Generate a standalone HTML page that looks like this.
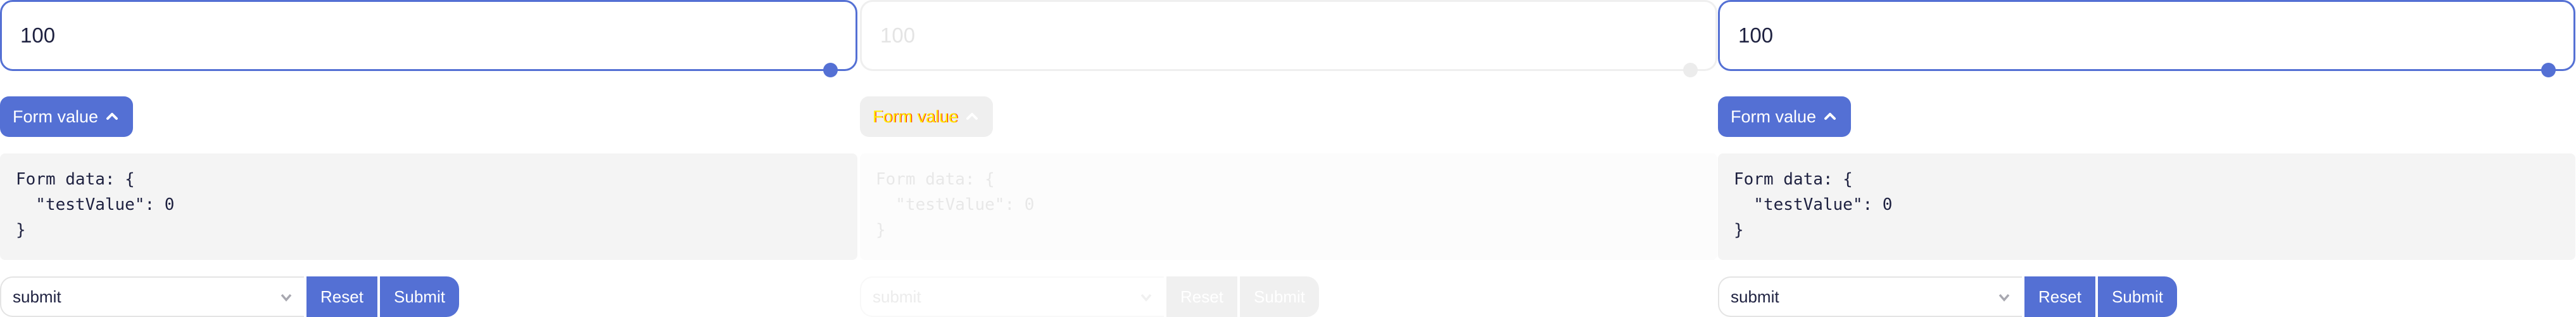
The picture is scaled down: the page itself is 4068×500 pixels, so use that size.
<!DOCTYPE html>
<html><head><style>
*{box-sizing:border-box;margin:0;padding:0}
body{width:4068px;height:500px;background:#fff;position:relative;overflow:hidden;font-family:"Liberation Sans","DejaVu Sans",sans-serif}
.col{position:absolute;top:0;width:1354px;height:500px}
.inp{position:absolute;left:0;top:0;width:1354px;height:112px;border:3px solid #5470d4;border-radius:20px}
.inp span{position:absolute;left:29px;top:33px;font-size:33px;color:#1e2140;line-height:40px}
.knob{position:absolute;left:1300px;top:99px;width:23px;height:23px;border-radius:50%;background:#5470d4}
.fv{position:absolute;left:0;top:152px;width:210px;height:64px;border-radius:14px;background:#5470d4;color:#fff;font-size:27px;line-height:64px;padding-left:20px}
.fv svg{position:absolute;left:166px;top:23px}
.pre{position:absolute;left:0;top:242px;width:1354px;height:168px;background:#f4f4f4;border-radius:8px;font-family:"DejaVu Sans Mono","Liberation Mono",monospace;font-size:26px;line-height:40px;color:#1e2140;padding:21px 0 0 25px;white-space:pre}
.sel{position:absolute;left:0;top:436px;width:480px;height:64px;border:2px solid #e4e4e4;border-right:none;border-radius:20px 0 0 20px;font-size:26px;line-height:60px;padding-left:18px;color:#1e2140}
.sel svg{position:absolute;left:440px;top:24px}
.b{position:absolute;top:436px;height:64px;background:#5470d4;color:#fff;font-size:26px;line-height:64px;text-align:center}
.r{left:484px;width:112px}
.s{left:600px;width:125px;border-radius:0 20px 20px 0}
.d .inp{border-color:#efefef}
.d .inp span{color:#e4e4e4}
.d .knob{background:#ececec}
.d .fv{background:#efefef;color:#ffee00;text-shadow:1px 0 0 #f00}
.d .pre{background:#fcfcfc;color:#e8e8e8}
.d .sel{border-color:#f8f8f8;color:#ececec}
.d .b{background:#f0f0f0}
</style></head><body>
<div class="col" style="left:0">
<div class="inp"><span>100</span></div><div class="knob"></div>
<div class="fv">Form value<svg width="22" height="16" viewBox="0 0 22 16"><path d="M4 12 L11 5 L18 12" stroke="#fff" stroke-width="4" fill="none" stroke-linecap="round" stroke-linejoin="round"/></svg></div>
<div class="pre">Form data: {
  "testValue": 0
}</div>
<div class="sel">submit<svg width="20" height="14" viewBox="0 0 20 14"><path d="M3 3 L10 11 L17 3" stroke="#a8a8b0" stroke-width="3.5" fill="none"/></svg></div>
<div class="b r">Reset</div><div class="b s">Submit</div>
</div>
<div class="col d" style="left:1358px">
<div class="inp"><span>100</span></div><div class="knob"></div>
<div class="fv">Form value<svg width="22" height="16" viewBox="0 0 22 16"><path d="M4 12 L11 5 L18 12" stroke="#fff" stroke-width="4" fill="none" stroke-linecap="round" stroke-linejoin="round"/></svg></div>
<div class="pre">Form data: {
  "testValue": 0
}</div>
<div class="sel">submit<svg width="20" height="14" viewBox="0 0 20 14"><path d="M3 3 L10 11 L17 3" stroke="#f0f0f0" stroke-width="3.5" fill="none"/></svg></div>
<div class="b r">Reset</div><div class="b s">Submit</div>
</div>
<div class="col" style="left:2713px">
<div class="inp"><span>100</span></div><div class="knob"></div>
<div class="fv">Form value<svg width="22" height="16" viewBox="0 0 22 16"><path d="M4 12 L11 5 L18 12" stroke="#fff" stroke-width="4" fill="none" stroke-linecap="round" stroke-linejoin="round"/></svg></div>
<div class="pre">Form data: {
  "testValue": 0
}</div>
<div class="sel">submit<svg width="20" height="14" viewBox="0 0 20 14"><path d="M3 3 L10 11 L17 3" stroke="#a8a8b0" stroke-width="3.5" fill="none"/></svg></div>
<div class="b r">Reset</div><div class="b s">Submit</div>
</div>
</body></html>
